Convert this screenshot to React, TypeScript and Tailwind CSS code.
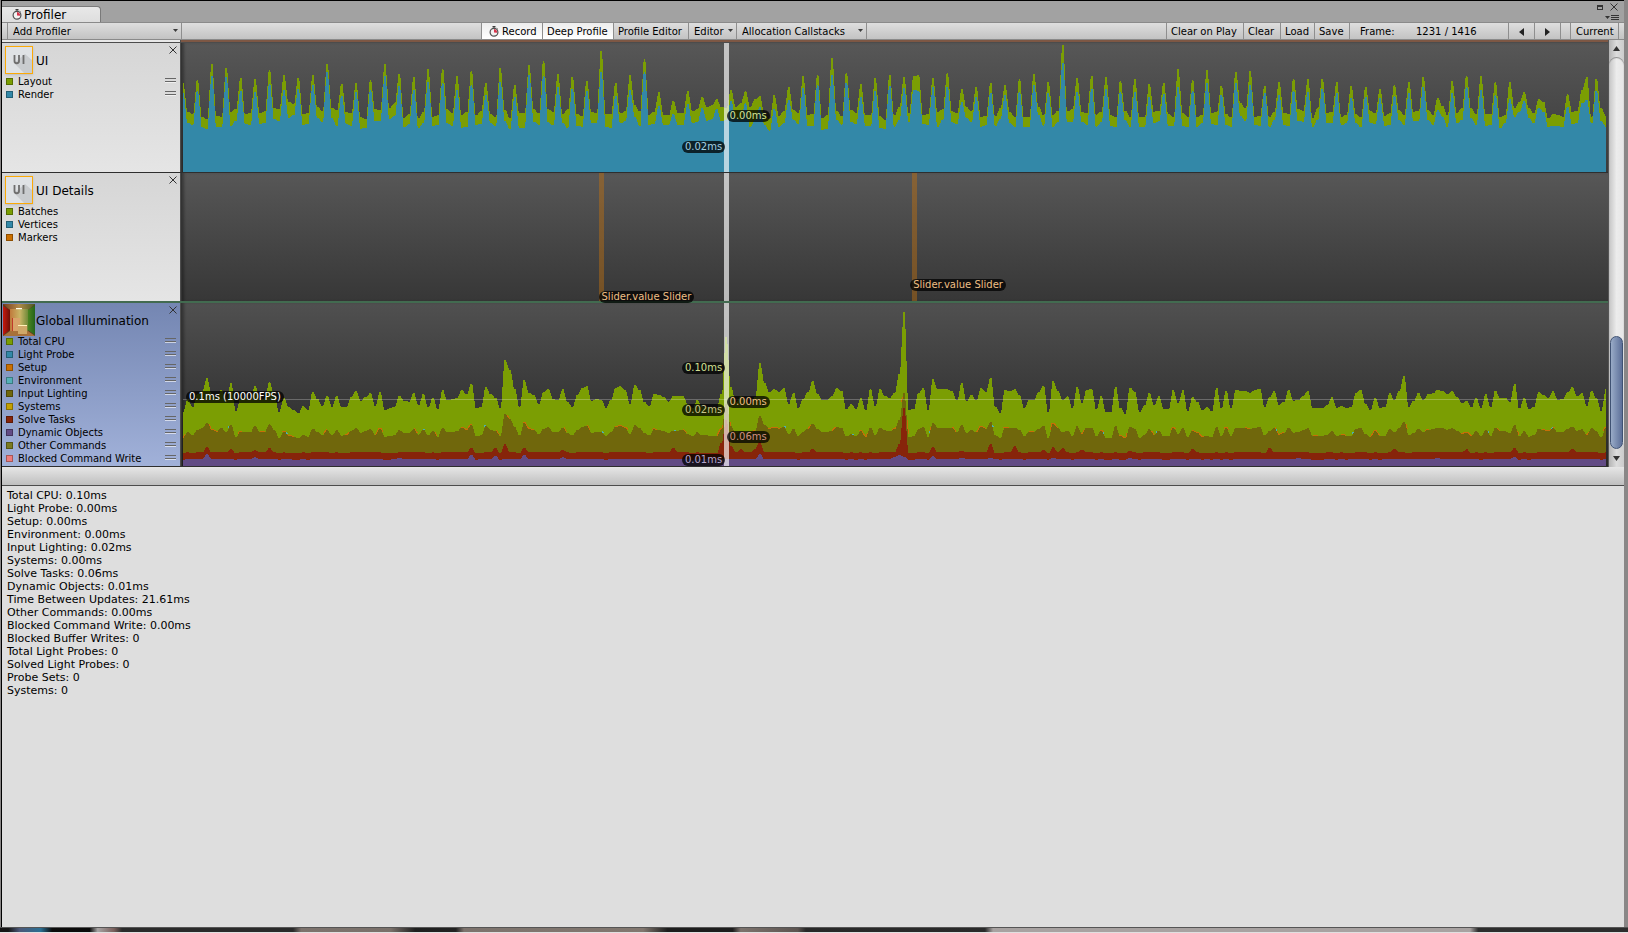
import React from "react";

type Pair = [number, number];

/* One sample per frame; a spike every third frame, two resting frames between.
   Values are depths below the top of the plot, in thirds of a pixel. */
const LAYOUT_PEAKS = [
  129, 121, 72, 84, 114, 117, 91, 106, 114, 106, 73, 132, 129, 121, 73, 102, 111, 88, 88, 109,
  94, 129, 85, 136, 76, 64, 102, 111, 123, 34, 130, 106, 58, 157, 183, 153, 171, 177, 151, 154,
  168, 166, 142, 109, 106, 55, 100, 133, 114, 106, 112, 106, 115, 100, 148, 142, 130, 136, 118, 102,
  127, 15, 114, 108, 112, 124, 117, 133, 130, 88, 121, 90, 138, 96, 93, 138, 126, 117, 117, 117,
  126, 138, 142, 147, 135, 126, 111, 174, 123, 108, 108, 126, 126, 157, 177, 223, 163, 150, 117,
];
const RENDER_PEAKS = [
  160, 154, 108, 112, 154, 155, 132, 150, 148, 136, 97, 168, 157, 151, 108, 138, 150, 126, 130, 150,
  136, 165, 126, 172, 105, 108, 142, 147, 153, 97, 168, 150, 96, 197, 221, 192, 205, 208, 183, 190,
  202, 208, 180, 144, 136, 106, 128, 170, 154, 138, 144, 152, 142, 140, 187, 170, 158, 166, 155, 136,
  160, 68, 155, 147, 148, 155, 157, 172, 163, 142, 153, 130, 165, 130, 135, 160, 165, 152, 155, 146,
  160, 173, 170, 175, 167, 160, 142, 210, 160, 142, 150, 165, 178, 183, 203, 257, 200, 190, 153,
];
const LAYOUT_REST: Pair[] = [
  [215, 222], [230, 237], [227, 230], [215, 206], [222, 218], [220, 214], [205, 208], [186, 191], [222, 220], [202, 212],
  [204, 210], [217, 220], [232, 237], [208, 210], [203, 190], [233, 222], [235, 215], [230, 226], [208, 220], [226, 216],
  [226, 212], [222, 232], [210, 234], [218, 220], [208, 220], [208, 216], [222, 208], [222, 228], [216, 220], [222, 222],
  [220, 214], [196, 214], [224, 215], [225, 225], [220, 220], [214, 208], [202, 196], [200, 205], [200, 190], [200, 178],
  [225, 238], [228, 212], [210, 220], [224, 222], [235, 225], [212, 228], [210, 218], [226, 224], [228, 240], [226, 200],
  [218, 108], [226, 222], [216, 208], [214, 220], [202, 214], [230, 228], [228, 205], [215, 230], [232, 230], [200, 225],
  [225, 212], [214, 208], [215, 220], [224, 215], [225, 232], [212, 230], [230, 230], [215, 212], [222, 230], [220, 230],
  [230, 225], [220, 215], [222, 232], [190, 205], [230, 228], [232, 215], [218, 222], [208, 212], [234, 205], [218, 216],
  [230, 224], [222, 232], [212, 220], [228, 220], [210, 225], [215, 212], [210, 224], [198, 225], [218, 205], [205, 222],
  [222, 222], [232, 225], [205, 185], [205, 220], [185, 235], [224, 230], [215, 212], [111, 230], [205, 228],
];
const RENDER_REST: Pair[] = [
  [248, 254], [262, 267], [261, 261], [257, 242], [253, 254], [251, 250], [238, 243], [233, 226], [254, 251], [235, 245],
  [235, 257], [252, 257], [266, 264], [243, 242], [238, 228], [262, 252], [264, 250], [258, 255], [250, 257], [263, 260],
  [254, 251], [250, 257], [244, 267], [263, 263], [245, 254], [247, 256], [248, 264], [257, 260], [248, 249], [262, 263],
  [250, 244], [230, 257], [254, 252], [256, 254], [256, 255], [250, 245], [242, 238], [243, 240], [235, 240], [262, 240],
  [255, 272], [260, 250], [240, 252], [258, 257], [270, 266], [240, 254], [245, 253], [258, 257], [265, 266], [260, 240],
  [245, 150], [253, 254], [260, 240], [247, 252], [235, 245], [260, 256], [258, 238], [250, 260], [262, 262], [225, 257],
  [260, 245], [247, 245], [245, 254], [260, 247], [258, 261], [240, 260], [260, 260], [250, 244], [257, 258], [258, 261],
  [260, 250], [252, 256], [255, 260], [228, 243], [255, 257], [262, 240], [256, 257], [243, 245], [262, 240], [250, 248],
  [256, 250], [250, 262], [248, 252], [257, 256], [240, 255], [243, 242], [240, 255], [230, 260], [250, 240], [235, 255],
  [257, 256], [265, 250], [230, 215], [235, 250], [215, 260], [257, 262], [253, 248], [180, 250], [242, 260],
];

const UI_DEPTH = 396;
const interleave = (peaks: number[], rest: Pair[]) =>
  peaks.flatMap((p, i) => [p, rest[i][0], rest[i][1]]).slice(0, 297).map((v) => UI_DEPTH - v);

const layoutSeries = interleave(LAYOUT_PEAKS, LAYOUT_REST);
const renderSeries = interleave(RENDER_PEAKS, RENDER_REST);

const TOTAL_CPU = [
  163, 200, 178, 215, 225, 263, 213, 203, 228, 198, 248, 165, 203, 203, 198, 241, 198, 203, 251, 213,
  163, 203, 176, 168, 158, 180, 168, 223, 200, 180, 211, 178, 211, 176, 178, 208, 226, 196, 208, 218,
  180, 223, 168, 173, 178, 211, 196, 193, 218, 183, 215, 177, 205, 170, 227, 197, 200, 205, 227, 215,
  247, 173, 177, 237, 215, 205, 175, 317, 289, 232, 177, 257, 219, 212, 185, 221, 232, 201, 197, 230,
  192, 177, 212, 234, 239, 195, 200, 199, 175, 199, 235, 239, 227, 187, 244, 227, 192, 179, 217, 213,
  207, 193, 209, 210, 211, 185, 175, 197, 177, 177, 175, 175, 217, 387, 237, 192, 209, 197, 187, 207,
  309, 249, 222, 230, 222, 233, 187, 219, 175, 202, 222, 255, 217, 199, 199, 210, 233, 225, 171, 185,
  171, 204, 167, 230, 179, 230, 211, 204, 219, 277, 461, 167, 172, 219, 234, 169, 260, 230, 230, 230,
  224, 197, 250, 194, 214, 197, 234, 222, 265, 177, 159, 229, 224, 230, 212, 173, 197, 199, 222, 240,
  162, 254, 225, 197, 209, 174, 237, 190, 229, 230, 171, 209, 162, 162, 237, 174, 157, 235, 222, 162,
  182, 219, 182, 209, 172, 172, 227, 189, 227, 165, 206, 193, 168, 176, 164, 234, 173, 226, 173, 228,
  226, 225, 220, 228, 232, 178, 206, 225, 183, 193, 228, 196, 198, 211, 226, 174, 174, 174, 183, 206,
  175, 180, 175, 176, 220, 228, 186, 168, 205, 175, 176, 218, 198, 226, 270, 178, 196, 219, 198, 215,
  218, 228, 225, 216, 225, 208, 188, 194, 176, 205, 173, 216, 176, 225, 205, 205, 193, 246, 173, 205,
  170, 178, 222, 212, 205, 225, 198, 201, 221, 236, 210, 218, 180, 226, 204, 166, 230,
];
const SOLVE_BUMPS: Record<number, number> = {
  5: 57, 10: 51, 15: 47, 18: 54, 60: 55, 65: 55, 67: 65, 71: 55, 79: 48, 102: 54, 112: 70, 113: 137, 114: 60,
  116: 50, 119: 52, 120: 72, 131: 52, 149: 66, 150: 175, 156: 56, 162: 46, 168: 66, 173: 59, 179: 49, 181: 57,
  183: 53, 187: 49, 197: 46, 210: 51, 226: 55, 252: 51, 267: 50, 277: 54, 289: 52,
};
const DYNAMIC_BUMPS: Record<number, number> = {
  5: 36, 15: 26, 45: 24, 60: 33, 65: 30, 71: 33, 79: 26, 120: 35, 148: 28, 149: 32, 150: 28, 156: 30, 162: 25,
  168: 25, 181: 24, 197: 24, 232: 24, 261: 24, 277: 27,
};
const inputSeries = TOTAL_CPU.map((v) => v * 0.45 + 12);
const solveSeries = TOTAL_CPU.map((v, i) => SOLVE_BUMPS[i] ?? (v < 180 ? 38 : 41));
const dynamicSeries = TOTAL_CPU.map((v, i) => DYNAMIC_BUMPS[i] ?? (v < 176 ? 19 : 21));

/* Each sample keeps a short flat top so that narrow spikes reach full height. */
const line = (series: number[], depth: number) =>
  series.map((v, i) => `${i - 0.18},${depth - v} ${i + 0.18},${depth - v}`).join(" ");
const area = (series: number[], depth: number) =>
  `-1,${depth} ${line(series, depth)} ${series.length},${depth}`;

const FRAMES = 296;

function UiPlot() {
  const depth = UI_DEPTH - 9;
  return (
    <svg className="block h-full w-full" viewBox={`0 0 ${FRAMES} ${depth}`} preserveAspectRatio="none" shapeRendering="crispEdges" aria-hidden="true">
      <polygon points={area(layoutSeries, depth)} fill="#7b9e03" />
      <polygon points={area(renderSeries, depth)} fill="#3388a8" />
    </svg>
  );
}

function GiPlot() {
  const depth = 489;
  return (
    <svg className="block h-full w-full" viewBox={`0 0 ${FRAMES} ${depth}`} preserveAspectRatio="none" shapeRendering="crispEdges" aria-hidden="true">
      <polygon points={area(TOTAL_CPU, depth)} fill="#7b9e03" />
      <polyline points={line(inputSeries, depth)} fill="none" stroke="#c86e06" strokeWidth="2" strokeDasharray="5 34 14 41 5 27" vectorEffect="non-scaling-stroke" />
      <polyline points={line(inputSeries, depth)} fill="none" stroke="#4cb0b0" strokeWidth="2" strokeDasharray="0 71 2 96 2 118" vectorEffect="non-scaling-stroke" />
      <polygon points={area(inputSeries, depth)} fill="#70670c" />
      <polygon points={area(solveSeries, depth)} fill="#87240a" />
      <polygon points={area(dynamicSeries, depth)} fill="#624b85" />
    </svg>
  );
}

function Cursor() {
  return <div className="absolute inset-y-0 left-[38.2%] -ml-[3px] w-[5px] bg-white/65" />;
}

function Pill({ className, children }: { className: string; children: React.ReactNode }) {
  return (
    <span className={`absolute h-3 whitespace-nowrap rounded-full bg-black/75 px-[3px] text-[10px] leading-3 ${className}`}>
      {children}
    </span>
  );
}

const Stopwatch = () => (
  <svg width="10" height="11" viewBox="0 0 10 11" className="shrink-0" aria-hidden="true">
    <rect x="3.5" y="0" width="3" height="1.4" fill="#3c3c3c" />
    <path d="M5 1v2M7.8 2.2l.9.8" stroke="#555" strokeWidth="1" />
    <circle cx="5" cy="6.3" r="3.9" fill="#f2f2f2" stroke="#505050" strokeWidth="1.2" />
    <path d="M5 6.500V3A3.400 3.400 0 0 1 8 6.800Z" fill="#d8344c" />
  </svg>
);

const UiIcon = () => (
  <svg width="28" height="28" viewBox="0 0 28 28" className="shrink-0 shadow-sm" aria-hidden="true">
    <rect width="28" height="28" fill="#dfe2e5" />
    <path d="M9 17 20 8 28 15V28H20Z" fill="#c9cccf" />
    <path d="M9.500 9v6a2.250 2.250 0 0 0 4.500 0V9M18.500 9v9" stroke="#6e6e6e" strokeWidth="1.8" fill="none" />
    <rect x=".5" y=".5" width="27" height="27" fill="none" stroke="#fba905" />
  </svg>
);

const CornellIcon = () => (
  <svg width="32" height="32" viewBox="0 0 32 32" className="shrink-0" aria-hidden="true">
    <defs>
      <linearGradient id="wall" x1="0" x2="1">
        <stop offset="0" stopColor="#c07a3c" />
        <stop offset=".55" stopColor="#c9b566" />
        <stop offset="1" stopColor="#6f8a38" />
      </linearGradient>
      <linearGradient id="ceiling" x1="0" x2="1">
        <stop offset="0" stopColor="#7a3c1c" />
        <stop offset=".5" stopColor="#b08a4a" />
        <stop offset="1" stopColor="#4c5a22" />
      </linearGradient>
      <linearGradient id="red" x1="0" x2="1">
        <stop offset="0" stopColor="#c8180c" />
        <stop offset="1" stopColor="#6c0f08" />
      </linearGradient>
      <linearGradient id="green" x1="0" x2="1">
        <stop offset="0" stopColor="#4a8420" />
        <stop offset="1" stopColor="#24641a" />
      </linearGradient>
    </defs>
    <rect width="32" height="32" fill="#5a3d20" />
    <path d="M0 0H32L25 6H7Z" fill="url(#ceiling)" />
    <rect x="7" y="5" width="18" height="22" fill="url(#wall)" />
    <path d="M0 2 7 6V26L0 31Z" fill="url(#red)" />
    <path d="M32 1 25 6V26L32 31Z" fill="url(#green)" />
    <path d="M0 32 7 27H25L32 32Z" fill="#a8713a" />
    <rect x="10" y="14" width="7" height="13" fill="#d9a36a" />
    <path d="M9 14h1v13H9Z" fill="#c0382a" />
    <rect x="15" y="21" width="9" height="9" fill="#cfa868" />
    <rect x="15" y="21" width="9" height="1" fill="#fff2b8" />
    <rect x="13" y="4" width="6" height="1.200" fill="#fffbe8" />
  </svg>
);

type Legend = { name: string; swatch: string };

function Module({ title, icon, legend, selected, handles }: { title: string; icon: React.ReactNode; legend: Legend[]; selected?: boolean; handles?: boolean }) {
  return (
    <div
      className={`w-[179px] shrink-0 border-r border-[#4c4c4c] bg-gradient-to-b pt-[2px] ${
        selected ? "from-[#7486b2] to-[#a1b1d9]" : "from-[#d6d6d6] to-[#e5e5e5]"
      }`}
    >
      <div className="relative flex h-[30px] items-center">
        <span className="flex w-[34px] shrink-0 justify-center">{icon}</span>
        <h2 className="pt-0.5 text-[12px] leading-4">{title}</h2>
        <button type="button" aria-label={`Remove ${title}`} className="absolute right-[3px] top-px">
          <svg width="8" height="8" viewBox="0 0 8 8" className="block" aria-hidden="true">
            <path d="M.5.5l7 7M7.500.5l-7 7" stroke="#333" strokeWidth="1" />
          </svg>
        </button>
      </div>
      <ul>
        {legend.map((l) => (
          <li key={l.name} className="flex h-[13px] items-center pl-1 pr-1">
            <span className={`mr-[5px] size-[7px] shrink-0 border border-black/30 ${l.swatch}`} />
            <span className="text-[10px] leading-[13px]">{l.name}</span>
            {handles && (
              <span className="ml-auto mt-[3px] h-1 w-[11px] self-start border-y border-[#666] shadow-[0_1px_0_#ffffff99]" />
            )}
          </li>
        ))}
      </ul>
    </div>
  );
}

const UI_LEGEND: Legend[] = [
  { name: "Layout", swatch: "bg-[#7b9e03]" },
  { name: "Render", swatch: "bg-[#3388a8]" },
];
const DETAILS_LEGEND: Legend[] = [
  { name: "Batches", swatch: "bg-[#7b9e03]" },
  { name: "Vertices", swatch: "bg-[#3388a8]" },
  { name: "Markers", swatch: "bg-[#cc7000]" },
];
const GI_LEGEND: Legend[] = [
  { name: "Total CPU", swatch: "bg-[#7b9e03]" },
  { name: "Light Probe", swatch: "bg-[#3388a8]" },
  { name: "Setup", swatch: "bg-[#cc7000]" },
  { name: "Environment", swatch: "bg-[#55b0b8]" },
  { name: "Input Lighting", swatch: "bg-[#70670c]" },
  { name: "Systems", swatch: "bg-[#c4a000]" },
  { name: "Solve Tasks", swatch: "bg-[#87240a]" },
  { name: "Dynamic Objects", swatch: "bg-[#624b85]" },
  { name: "Other Commands", swatch: "bg-[#7a7a20]" },
  { name: "Blocked Command Write", swatch: "bg-[#ee7c7c]" },
];

const STATS = [
  "Total CPU: 0.10ms",
  "Light Probe: 0.00ms",
  "Setup: 0.00ms",
  "Environment: 0.00ms",
  "Input Lighting: 0.02ms",
  "Systems: 0.00ms",
  "Solve Tasks: 0.06ms",
  "Dynamic Objects: 0.01ms",
  "Time Between Updates: 21.61ms",
  "Other Commands: 0.00ms",
  "Blocked Command Write: 0.00ms",
  "Blocked Buffer Writes: 0",
  "Total Light Probes: 0",
  "Solved Light Probes: 0",
  "Probe Sets: 0",
  "Systems: 0",
];

function ToolButton({ className, pressed, children }: { className: string; pressed?: boolean; children: React.ReactNode }) {
  return (
    <button
      type="button"
      aria-pressed={pressed}
      className={`flex h-full shrink-0 items-center whitespace-nowrap border-r border-[#8e8e8e] pt-px ${
        pressed ? "bg-gradient-to-b from-[#ededed] to-white" : ""
      } ${className}`}
    >
      {children}
    </button>
  );
}

function ToolSelect({ className, label }: { className: string; label: string }) {
  return (
    <div className={`relative h-full shrink-0 border-r border-[#8e8e8e] ${className}`}>
      <select aria-label={label} className="h-full w-full appearance-none bg-transparent pl-[5px] pt-px outline-none">
        <option>{label}</option>
      </select>
      <svg width="5" height="3" viewBox="0 0 5 3" className="pointer-events-none absolute right-[3px] top-1.5" aria-hidden="true">
        <path d="M0 0h5L2.500 3Z" fill="#3c3c3c" />
      </svg>
    </div>
  );
}

const PLOT = "relative min-w-0 flex-1 border-l border-[#333] bg-gradient-to-b pl-px pr-[2px] shadow-[inset_3px_0_3px_-1px_#00000055]";

export default function App() {
  return (
    <div className="flex min-h-screen flex-col bg-[#3a3a3a] font-['DejaVu_Sans',sans-serif] text-black">
      <div className="flex flex-1 bg-[#8a8787]">
        <main className="ml-px mr-[4px] flex min-w-0 flex-1 flex-col border-l border-t border-black bg-[#dedede]">
          <header className="flex h-[21px] items-end justify-between bg-[#a2a2a2]">
            <button type="button" role="tab" aria-selected="true" className="flex h-4 w-[99px] items-center gap-[2px] rounded-tr-sm border-r border-t border-[#7a7a7a] bg-gradient-to-b from-[#e8e8e8] to-[#dedede] pl-2.5 text-[12px] leading-4">
              <Stopwatch />
              <span className="pt-px">Profiler</span>
            </button>
            <div className="flex h-full flex-col items-end justify-between pb-px pr-[5px] pt-[2px]">
              <div className="flex items-center gap-[7px] pr-px">
                <button type="button" aria-label="Maximize" className="h-[5px] w-1.5 border border-t-2 border-[#333]" />
                <button type="button" aria-label="Close">
                  <svg width="8" height="8" viewBox="0 0 8 8" className="block" aria-hidden="true">
                    <path d="M.5.5l7 7M7.500.5l-7 7" stroke="#333" strokeWidth="1" />
                  </svg>
                </button>
              </div>
              <button type="button" aria-label="Window menu">
                <svg width="14" height="6" viewBox="0 0 14 6" className="block" aria-hidden="true">
                  <path d="M0 1h5L2.500 4Z" fill="#333" />
                  <path d="M6 .5h8M6 2.500h8M6 4.500h8" stroke="#333" strokeWidth="1" />
                </svg>
              </button>
            </div>
          </header>

          <div role="toolbar" aria-label="Profiler" className="flex h-[18px] items-stretch border-y border-[#8a8a8a] bg-gradient-to-b from-[#dedede] to-[#c3c3c3] text-[10px] leading-4">
            <div className="w-1.5 shrink-0 border-r border-[#8e8e8e]" />
            <ToolSelect className="w-[174px]" label="Add Profiler" />
            <div className="flex-1 border-r border-[#8e8e8e]" />
            <ToolButton className="w-[61px] gap-[3px] pl-[7px]" pressed>
              <Stopwatch />
              Record
            </ToolButton>
            <ToolButton className="w-[71px] pl-1" pressed>Deep Profile</ToolButton>
            <ToolButton className="w-[75px] pl-1">Profile Editor</ToolButton>
            <ToolSelect className="w-[48px]" label="Editor" />
            <ToolSelect className="w-[130px]" label="Allocation Callstacks" />
            <div className="flex-1 border-r border-[#8e8e8e]" />
            <ToolButton className="w-[77px] pl-1">Clear on Play</ToolButton>
            <ToolButton className="w-[37px] pl-1">Clear</ToolButton>
            <ToolButton className="w-[34px] pl-1">Load</ToolButton>
            <ToolButton className="w-[35px] pl-1">Save</ToolButton>
            <div className="flex w-[159px] shrink-0 items-center border-r border-[#8e8e8e] pl-2.5 pt-0.5">
              <span className="w-[56px]">Frame:</span>
              <span>1231 / 1416</span>
            </div>
            <ToolButton className="w-[26px] justify-center">
              <svg width="5" height="8" viewBox="0 0 5 8" role="img" aria-label="Previous frame">
                <path d="M5 0v8L0 4Z" fill="#222" />
              </svg>
            </ToolButton>
            <ToolButton className="w-[26px] justify-center">
              <svg width="5" height="8" viewBox="0 0 5 8" role="img" aria-label="Next frame">
                <path d="M0 0v8l5-4Z" fill="#222" />
              </svg>
            </ToolButton>
            <div className="w-2.5 shrink-0 border-r border-[#8e8e8e]" />
            <ToolButton className="w-[48px] pl-[5px]">Current</ToolButton>
            <div className="w-[5px] shrink-0" />
          </div>

          <section className="flex">
            <div className="min-w-0 flex-1">
              <div className="flex h-[3px] border-b border-[#4c4c4c]">
                <div className="w-[179px] border-r border-[#4c4c4c] bg-[#e8e8e8]" />
                <div className="flex-1 bg-[#7d5744]" />
              </div>

              <div className="flex h-[130px] border-b border-[#2e2e2e]">
                <Module title="UI" icon={<UiIcon />} legend={UI_LEGEND} handles />
                <div className={`${PLOT} from-[#575757] to-[#3a3a3a]`}>
                  <div className="relative h-full">
                    <UiPlot />
                    <Cursor />
                    <Pill className="right-[61.9%] top-[98px] text-[#a3cfe2]">0.02ms</Pill>
                    <Pill className="left-[38.2%] top-[67px] text-[#d3e094]">0.00ms</Pill>
                  </div>
                </div>
              </div>

              <div className="flex h-[130px] border-b-2 border-[#426b50]">
                <Module title="UI Details" icon={<UiIcon />} legend={DETAILS_LEGEND} />
                <div className={`${PLOT} from-[#575757] to-[#373737]`}>
                  <div className="relative h-full">
                    <div className="absolute inset-y-0 left-[29.2%] w-[5px] bg-[#c07010]/45" />
                    <div className="absolute inset-y-0 left-[51.2%] w-[5px] bg-[#c07010]/45" />
                    <Cursor />
                    <Pill className="left-[29.2%] top-[118px] z-10 text-[#eebf85]">Slider.value Slider</Pill>
                    <Pill className="left-[51.1%] top-[106px] text-[#eebf85]">Slider.value Slider</Pill>
                  </div>
                </div>
              </div>

              <div className="flex h-[164px] border-b border-[#2e2e2e]">
                <Module title="Global Illumination" icon={<CornellIcon />} legend={GI_LEGEND} selected handles />
                <div className={`${PLOT} from-[#505050] to-[#282828]`}>
                  <div className="relative h-full">
                    <GiPlot />
                    <div className="absolute inset-x-0 top-[96px] h-px bg-white/25" />
                    <Cursor />
                    <Pill className="left-[3px] top-[88px] text-white">0.1ms (10000FPS)</Pill>
                    <Pill className="right-[61.9%] top-[59px] text-[#d3e094]">0.10ms</Pill>
                    <Pill className="right-[61.9%] top-[101px] text-[#c9c38c]">0.02ms</Pill>
                    <Pill className="right-[61.9%] top-[151px] text-[#b3a4cc]">0.01ms</Pill>
                    <Pill className="left-[38.2%] top-[93px] text-[#eebf85]">0.00ms</Pill>
                    <Pill className="left-[38.2%] top-[128px] text-[#cf9080]">0.06ms</Pill>
                  </div>
                </div>
              </div>
            </div>

            <div className="flex w-4 shrink-0 flex-col border-l border-[#555] bg-gradient-to-r from-[#b4b4b4] via-[#dcdcdc] to-[#cccccc]">
              <button type="button" aria-label="Scroll up" className="flex h-[17px] items-center justify-center">
                <svg width="7" height="5" viewBox="0 0 7 5" aria-hidden="true">
                  <path d="M0 5h7L3.500 0Z" fill="#333" />
                </svg>
              </button>
              <div className="flex flex-1 flex-col justify-end rounded-full bg-gradient-to-r from-[#c4c4c4] via-[#ececec] to-[#e6e6e6] shadow-[inset_0_1px_1px_#888]">
                <div className="mx-px h-[113px] rounded-full border border-[#3f5273] bg-gradient-to-r from-[#99abc7] to-[#5d7099]" />
              </div>
              <button type="button" aria-label="Scroll down" className="flex h-[18px] items-center justify-center">
                <svg width="7" height="5" viewBox="0 0 7 5" aria-hidden="true">
                  <path d="M0 0h7L3.500 5Z" fill="#333" />
                </svg>
              </button>
            </div>
          </section>

          <div className="h-[19px] border-b border-[#4c4c4c] bg-gradient-to-b from-[#e6e6e6] to-[#bfbfbf]" />

          <section aria-label="Frame statistics" className="flex-1 pl-[5px] pt-[3px] text-[11px] leading-[13px]">
            {STATS.map((s, i) => (
              <p key={i}>{s}</p>
            ))}
          </section>
        </main>
      </div>
      <div className="h-[6px] border-b border-t border-b-[#e0e0e0] border-t-[#555] bg-[linear-gradient(90deg,#161616_0.5%,#4c5878_1.2%,#2b6f93_2.5%,#0c0c0c_3.2%,#0a0a0a_5.5%,#a8a4a4_6%,#7a5f5c_7%,#2a2a2a_7.5%,#2a2a2a_18%,#7d736d_18.500%,#7a706a_24%,#1f1f1f_25.500%,#222_28%,#7d736d_28.500%,#82776f_39.500%,#1d1d1d_41%,#1d1d1d_45%,#7d736d_45.500%,#5c5450_49%,#282828_49.500%,#2a2a2a_60.500%,#a8a2a1_61%,#a8a2a1_90.300%,#2d2d2d_90.800%,#2d2d2d)]" />
    </div>
  );
}
